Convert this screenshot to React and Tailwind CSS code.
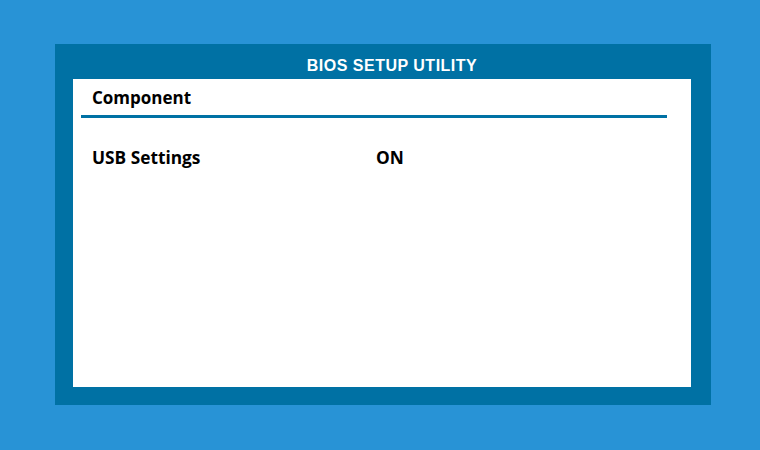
export default function App() {
  return (
    <div className="w-[760px] h-[450px] bg-[#2893d6] pt-[44px] pl-[55px]">
      {/* Outer frame */}
      <div className="w-[656px] h-[361px] bg-[#0071a4] flex flex-col pl-[18px] pr-[20px] pb-[18px]">
        <div className="h-[35px] flex items-center justify-center pl-[20px] pt-[13px] pb-[4px]">
          <h1 className="text-white font-bold text-[16px] tracking-[0.5px] leading-none font-['Liberation_Sans',Arial,sans-serif]">
            BIOS SETUP UTILITY
          </h1>
        </div>

        {/* Panel */}
        <div className="flex-1 bg-white pt-[7px] font-['Open_Sans',sans-serif]">
          <div className="pl-[19px] text-[17px] font-bold text-black leading-[24px]">Component</div>
          <div className="ml-[8px] mr-[24px] mt-[5px] h-[3px] bg-[#0071a4]" />
          <div className="flex pl-[19px] mt-[28px] text-[17.3px] font-bold text-black leading-[24px]">
            <span className="w-[284px]">USB Settings</span>
            <span>ON</span>
          </div>
        </div>
      </div>
    </div>
  );
}
